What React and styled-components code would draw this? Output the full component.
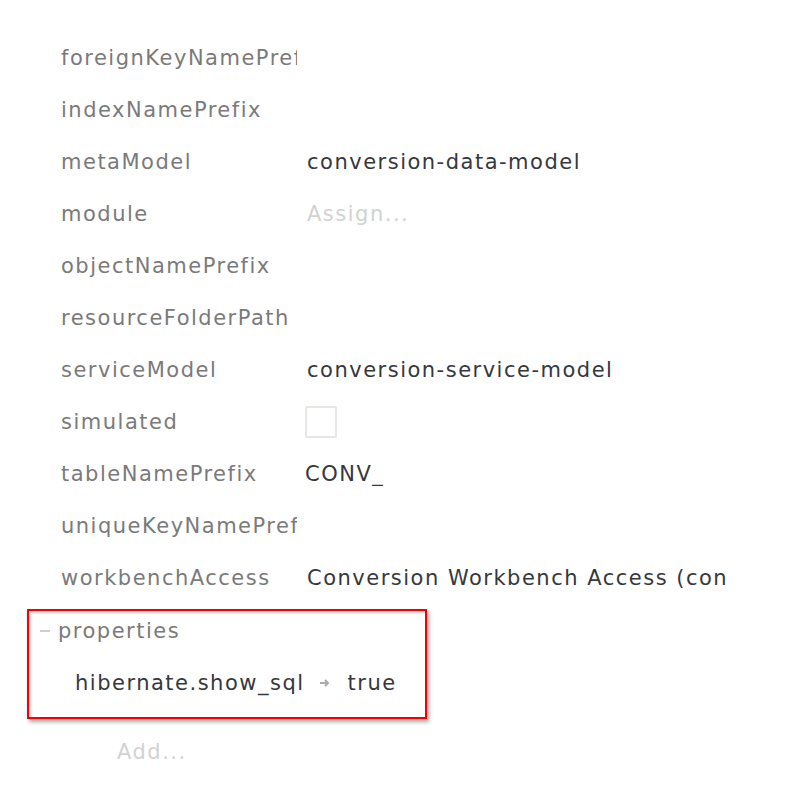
import React from "react";
import styled, { createGlobalStyle } from "styled-components";

const GlobalStyle = createGlobalStyle`
  html, body {
    margin: 0;
    padding: 0;
    background: #ffffff;
  }
  body {
    font-family: "DejaVu Sans", "Liberation Sans", sans-serif;
  }
`;

const Page = styled.div`
  width: 786px;
  height: 802px;
  padding: 32px 0 0 61px;
  box-sizing: border-box;
  overflow: hidden;
`;

const Table = styled.div`
  display: grid;
  grid-template-columns: 236px 426px;
  column-gap: 10px;
  grid-auto-rows: 52px;
  align-items: center;
`;

const Label = styled.div`
  font-size: 21px;
  letter-spacing: 1.5px;
  color: #7a7a7a;
  white-space: nowrap;
  overflow: hidden;
`;

const Value = styled.div`
  font-size: 21px;
  letter-spacing: 1.5px;
  color: ${(p) => (p.placeholder ? "#d2d2d2" : "#35383c")};
  white-space: nowrap;
  overflow: hidden;
  margin-left: ${(p) => p.shift || 0}px;
`;

const Checkbox = styled.div`
  width: 28px;
  height: 28px;
  border: 2px solid #e6e6e2;
  border-radius: 2px;
  margin-left: -2px;
`;

const Highlight = styled.div`
  margin: 5px 0 0 -34px;
  width: 400px;
  height: 110px;
  box-sizing: border-box;
  border: 2px solid #f40000;
  box-shadow: 2px 3px 4px rgba(0, 0, 0, 0.35), inset 2px 2px 3px rgba(0, 0, 0, 0.18);
  padding: 4px 0 0 11px;
`;

const GroupHead = styled.div`
  display: flex;
  align-items: center;
  gap: 8px;
  height: 32px;
  font-size: 21px;
  letter-spacing: 1.5px;
  color: #7a7a7a;
`;

const Collapse = styled.span`
  width: 10px;
  height: 2px;
  background: #cfcfcf;
`;

const PropRow = styled.div`
  display: flex;
  align-items: center;
  height: 52px;
  margin: 10px 0 0 35px;
  font-size: 21px;
  letter-spacing: 1.5px;
  color: #35383c;
`;

const PropText = styled.span``;

const Arrow = styled.svg`
  margin: 0 17px 0 14px;
`;

const AddLink = styled.div`
  margin: 21px 0 0 56px;
  font-size: 21px;
  letter-spacing: 1.5px;
  color: #d2d2d2;
`;

const rows = [
  { label: "foreignKeyNamePrefix" },
  { label: "indexNamePrefix" },
  { label: "metaModel", value: "conversion-data-model" },
  { label: "module", value: "Assign...", placeholder: true },
  { label: "objectNamePrefix" },
  { label: "resourceFolderPath" },
  { label: "serviceModel", value: "conversion-service-model" },
  { label: "simulated", checkbox: true },
  { label: "tableNamePrefix", value: "CONV_", shift: -2 },
  { label: "uniqueKeyNamePrefix" },
  { label: "workbenchAccess", value: "Conversion Workbench Access (con" },
];

export default function App() {
  return (
    <Page>
      <GlobalStyle />
      <Table>
        {rows.map((r) => (
          <React.Fragment key={r.label}>
            <Label>{r.label}</Label>
            {r.checkbox ? (
              <div>
                <Checkbox />
              </div>
            ) : (
              <Value placeholder={r.placeholder} shift={r.shift}>
                {r.value || ""}
              </Value>
            )}
          </React.Fragment>
        ))}
      </Table>
      <Highlight>
        <GroupHead>
          <Collapse />
          properties
        </GroupHead>
        <PropRow>
          <PropText>hibernate.show_sql</PropText>
          <Arrow width="12" height="10" viewBox="0 0 12 10">
            <path d="M1 5h8M6 2l3 3-3 3" stroke="#aaaaaa" strokeWidth="2" fill="none" />
          </Arrow>
          <PropText>true</PropText>
        </PropRow>
      </Highlight>
      <AddLink>Add...</AddLink>
    </Page>
  );
}
